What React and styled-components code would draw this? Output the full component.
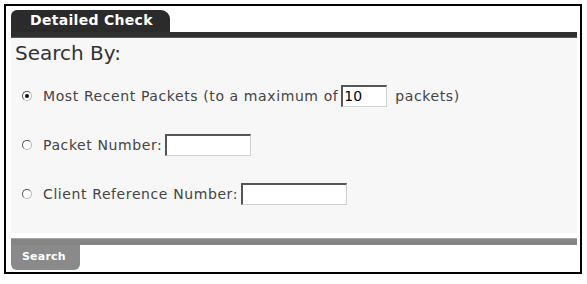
import React from "react";
import styled, { createGlobalStyle } from "styled-components";

const GlobalStyle = createGlobalStyle`
  html, body {
    margin: 0;
    padding: 0;
    background: #ffffff;
  }
  body {
    font-family: "DejaVu Sans", Verdana, sans-serif;
    color: #333333;
  }
`;

const Frame = styled.div`
  box-sizing: border-box;
  width: 578px;
  height: 270px;
  margin: 4px 0 0 4px;
  border: 2px solid #000000;
  padding: 4px 3px 0 5px;
  display: flex;
  flex-direction: column;
`;

const Header = styled.div`
  display: flex;
  flex-direction: column;
`;

const Tab = styled.div`
  box-sizing: border-box;
  width: 159px;
  height: 22px;
  padding-left: 19px;
  background: #2b2b2b;
  border-radius: 6px 9px 0 0;
  color: #ffffff;
  font-weight: bold;
  font-size: 14px;
  letter-spacing: 0.3px;
  line-height: 21px;
`;

const HeaderBar = styled.div`
  height: 5px;
  background: #2f2f2f;
  border-bottom: 1px solid #5a5a5a;
`;

const Panel = styled.div`
  height: 195px;
  background: #f7f7f7;
  padding: 3px 0 0 4px;
  box-sizing: border-box;
`;

const Heading = styled.div`
  font-size: 20px;
  line-height: 24px;
  color: #333333;
  margin-bottom: 19px;
`;

const Options = styled.div`
  display: flex;
  flex-direction: column;
  gap: 26px;
  padding-left: 5px;
`;

const Row = styled.label`
  display: flex;
  align-items: center;
  height: 23px;
  font-size: 14px;
  letter-spacing: 0.6px;
  color: #444444;
  white-space: pre;
`;

const Radio = styled.span`
  box-sizing: border-box;
  width: 10px;
  height: 10px;
  margin: 0 11px 0 2px;
  border-radius: 50%;
  border: 1px solid #b8b8b8;
  border-top-color: #555555;
  border-left-color: #555555;
  background: #ffffff;
  display: flex;
  align-items: center;
  justify-content: center;
  &::after {
    content: "";
    width: 4px;
    height: 4px;
    border-radius: 50%;
    background: ${(p) => (p.$checked ? "#111111" : "transparent")};
  }
`;

const Field = styled.span`
  box-sizing: border-box;
  width: ${(p) => p.$w}px;
  height: 22px;
  margin: 0 ${(p) => p.$after || 0}px 0 3px;
  background: #ffffff;
  border: 1px solid #d0d0d0;
  border-top: 2px solid #555555;
  border-left: 2px solid #555555;
  font-size: 14px;
  letter-spacing: 0;
  line-height: 18px;
  padding-left: 1px;
  color: #000000;
`;

const Footer = styled.div`
  margin-top: 5px;
  display: flex;
  flex-direction: column;
`;

const FooterBar = styled.div`
  height: 6px;
  background: #858585;
  border-top: 1px solid #a8a8a8;
`;

const ButtonTab = styled.div`
  box-sizing: border-box;
  width: 69px;
  height: 25px;
  padding-left: 11px;
  background: #8a8a8a;
  border-radius: 0 0 6px 6px;
  color: #ffffff;
  font-weight: bold;
  font-size: 11px;
  letter-spacing: 0.2px;
  line-height: 24px;
`;

export default function App() {
  return (
    <>
      <GlobalStyle />
      <Frame>
        <Header>
          <Tab>Detailed Check</Tab>
          <HeaderBar />
        </Header>
        <Panel>
          <Heading>Search By:</Heading>
          <Options>
            <Row>
              <Radio $checked />
              Most Recent Packets (to a maximum of
              <Field $w={46} $after={8}>10</Field>
              packets)
            </Row>
            <Row>
              <Radio />
              Packet Number:
              <Field $w={86} />
            </Row>
            <Row>
              <Radio />
              Client Reference Number:
              <Field $w={106} />
            </Row>
          </Options>
        </Panel>
        <Footer>
          <FooterBar />
          <ButtonTab>Search</ButtonTab>
        </Footer>
      </Frame>
    </>
  );
}
